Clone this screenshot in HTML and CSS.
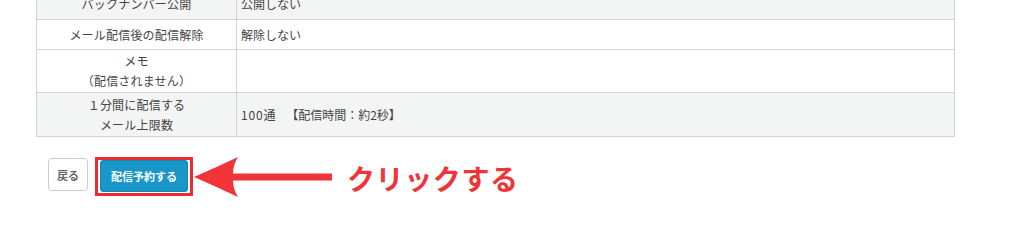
FILE: index.html
```html
<!DOCTYPE html>
<html lang="ja">
<head>
<meta charset="utf-8">
<title>配信予約</title>
<link rel="stylesheet" href="styles.css">
</head>
<body>
<div class="page">
  <table class="info">
    <tr class="shade r1">
      <th>バックナンバー公開</th>
      <td>公開しない</td>
    </tr>
    <tr class="r2">
      <th>メール配信後の配信解除</th>
      <td>解除しない</td>
    </tr>
    <tr class="r3">
      <th>メモ<br>（配信されません）</th>
      <td></td>
    </tr>
    <tr class="shade r4">
      <th>１分間に配信する<br>メール上限数</th>
      <td><span class="count">100通</span>　<span class="eta">【配信時間：約2秒】</span></td>
    </tr>
  </table>

  <div class="actions">
    <button class="btn-back" type="button">戻る</button>
    <div class="highlight">
      <button class="btn-submit" type="button">配信予約する</button>
    </div>
    <svg class="arrow" width="140" height="40" viewBox="0 0 140 40" aria-hidden="true">
      <path d="M1 20 Q24 10 45 0 Q40 8 40 16.5 L139 16.5 L139 23.5 L40 23.5 Q40 32 45 40 Q24 30 1 20 Z" fill="#f03438"/>
    </svg>
    <span class="callout">クリックする</span>
  </div>
</div>
</body>
</html>
```

FILE: styles.css
```css
html, body {
  margin: 0;
  padding: 0;
  background: #ffffff;
}

body {
  font-family: "Noto Sans CJK JP", "Noto Sans", sans-serif;
  color: #444444;
  overflow: hidden;
}

.page {
  padding-left: 36px;
}

.info {
  width: 919px;
  margin-top: -12px;
  border-collapse: collapse;
  font-size: 12px;
  line-height: 20px;
}

.info th,
.info td {
  border: 1px solid #d3d3d3;
  padding: 0 4px;
  vertical-align: middle;
}

.info th {
  width: 191px;
  font-weight: normal;
  text-align: center;
  letter-spacing: 0.2px;
}

.info td {
  text-align: left;
}

.info tr {
  background: #ffffff;
}

.info tr.shade {
  background: #f3f4f4;
}

.r1 { height: 31px; }
.r2 { height: 30px; }
.r3 { height: 43px; }
.r4 { height: 44px; }

.count {
  letter-spacing: 0.8px;
}

.eta {
  margin-left: 4px;
}

.actions {
  display: flex;
  align-items: flex-start;
  margin-top: 20px;
  padding-left: 12px;
}

.btn-back {
  box-sizing: border-box;
  width: 40px;
  height: 33px;
  margin-top: 1px;
  padding: 0;
  background: #ffffff;
  border: 1px solid #cccccc;
  border-radius: 4px;
  font-family: "Noto Sans CJK JP", sans-serif;
  font-size: 11px;
  font-weight: bold;
  color: #666666;
}

.highlight {
  display: flex;
  margin-left: 7px;
  padding: 0 2px 1px 2px;
  border: 3px solid #ee2a31;
}

.btn-submit {
  box-sizing: border-box;
  width: 88px;
  height: 32px;
  padding: 0;
  background: #1a97c9;
  border: 1px solid #1689b8;
  border-radius: 3px;
  font-family: "Noto Sans CJK JP", sans-serif;
  font-size: 11px;
  font-weight: bold;
  color: #ffffff;
}

.arrow {
  display: block;
}

.callout {
  margin-left: 14px;
  font-size: 28px;
  line-height: 42px;
  font-weight: bold;
  letter-spacing: 0.6px;
  color: #f03438;
}
```
